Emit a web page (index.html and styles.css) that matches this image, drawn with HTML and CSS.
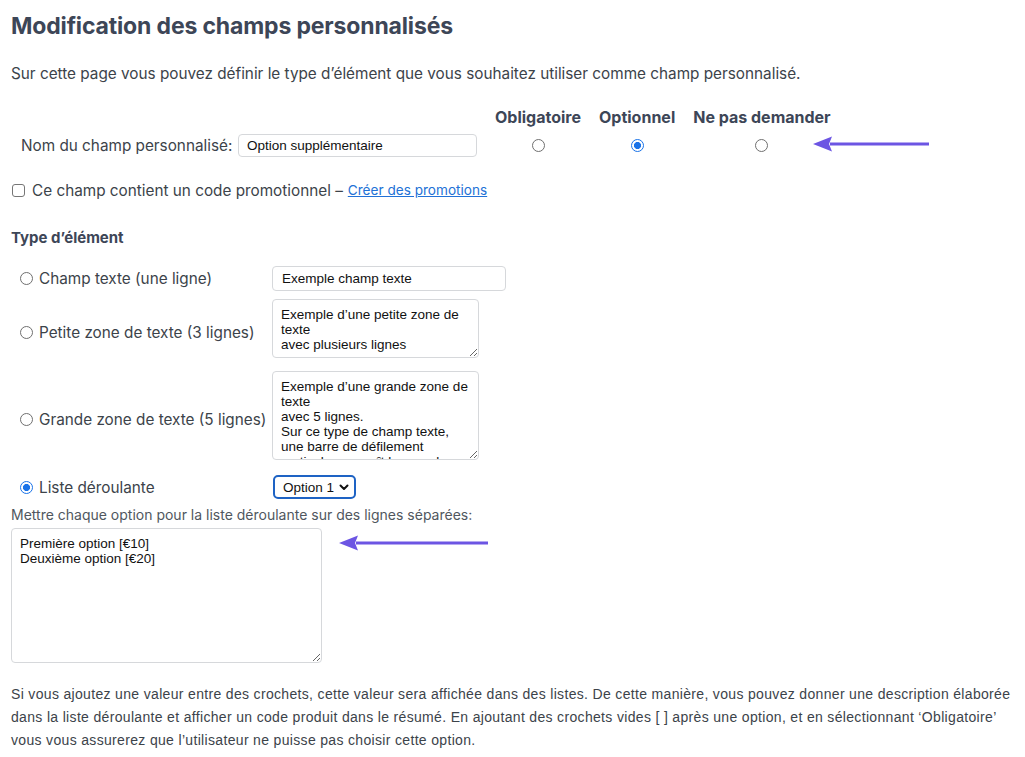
FILE: index.html
```html
<!DOCTYPE html>
<html lang="fr">
<head>
<meta charset="utf-8">
<title>Modification des champs personnalisés</title>
<link rel="stylesheet" href="styles.css">
</head>
<body>
<div class="page">
  <h1 class="title">Modification des champs personnalisés</h1>
  <p class="intro">Sur cette page vous pouvez définir le type d’élément que vous souhaitez utiliser comme champ personnalisé.</p>

  <div class="name-grid">
    <div class="cell"></div>
    <div class="col-head">Obligatoire</div>
    <div class="col-head">Optionnel</div>
    <div class="col-head">Ne pas demander</div>
    <div class="name-cell">
      <label class="name-label">Nom du champ personnalisé:</label>
      <input class="text-input name-input" type="text" value="Option supplémentaire">
    </div>
    <div class="radio-cell"><span class="radio"></span></div>
    <div class="radio-cell"><span class="radio checked"></span></div>
    <div class="radio-cell"><span class="radio"></span></div>
  </div>

  <div class="promo-row">
    <span class="checkbox"></span>
    <span class="promo-text">Ce champ contient un code promotionnel –</span>
    <a class="promo-link" href="#">Créer des promotions</a>
  </div>

  <h2 class="section-title">Type d’élément</h2>

  <div class="type-grid">
    <div class="type-label row1"><span class="radio"></span>Champ texte (une ligne)</div>
    <div class="type-field row1"><input class="text-input sample-input" type="text" value="Exemple champ texte"></div>

    <div class="type-label row2 area-label"><span class="radio"></span>Petite zone de texte (3 lignes)</div>
    <div class="type-field row2"><textarea class="area small-area">Exemple d’une petite zone de texte
avec plusieurs lignes</textarea></div>

    <div class="type-label row3 area-label"><span class="radio"></span>Grande zone de texte (5 lignes)</div>
    <div class="type-field row3"><textarea class="area big-area">Exemple d’une grande zone de texte
avec 5 lignes.
Sur ce type de champ texte, une barre de défilement verticale apparaît lorsque le texte dépasse.</textarea></div>

    <div class="type-label row4"><span class="radio checked"></span>Liste déroulante</div>
    <div class="type-field row4">
      <div class="select">Option 1
        <svg class="chev" width="10" height="7" viewBox="0 0 10 7"><path d="M1.5 1.5 L5 5 L8.5 1.5" fill="none" stroke="#111" stroke-width="2" stroke-linecap="round" stroke-linejoin="round"/></svg>
      </div>
    </div>
  </div>

  <p class="options-hint">Mettre chaque option pour la liste déroulante sur des lignes séparées:</p>
  <textarea class="area options-area">Première option [€10]
Deuxième option [€20]</textarea>

  <p class="footnote">Si vous ajoutez une valeur entre des crochets, cette valeur sera affichée dans des listes. De cette manière, vous pouvez donner une description élaborée dans la liste déroulante et afficher un code produit dans le résumé. En ajoutant des crochets vides [ ] après une option, et en sélectionnant ‘Obligatoire’ vous vous assurerez que l’utilisateur ne puisse pas choisir cette option.</p>

  <svg class="arrow arrow-top" width="120" height="20" viewBox="0 0 120 20"><path d="M17 8.5 H116 V11.5 H17 Z" fill="#6c55e3"/><path d="M0 10 L19 2.5 L16 10 L19 17.5 Z" fill="#6c55e3"/></svg>
  <svg class="arrow arrow-bottom" width="152" height="20" viewBox="0 0 152 20"><path d="M17 8.5 H149 V11.5 H17 Z" fill="#6c55e3"/><path d="M0 10 L19 2.5 L16 10 L19 17.5 Z" fill="#6c55e3"/></svg>
</div>
</body>
</html>
```

FILE: styles.css
```css
* { box-sizing: border-box; }
html, body { margin: 0; background: #ffffff; }
body {
  font-family: Inter, "Liberation Sans", Arial, sans-serif;
  color: #3c434a;
  font-size: 15.3px;
}
.page {
  position: relative;
  padding: 0 11px;
  width: 1025px;
  height: 757px;
  overflow: hidden;
}
.title {
  margin: 0;
  padding-top: 12px;
  font-size: 23px;
  line-height: 28px;
  font-weight: 700;
  color: #3d4657;
  letter-spacing: -0.15px;
}
.intro {
  margin: 0;
  padding-top: 23px;
  line-height: 22px;
}
.name-grid {
  display: grid;
  grid-template-columns: 466px auto auto auto;
  justify-content: start;
  column-gap: 18px;
  margin-top: 22px;
  align-items: center;
}
.col-head {
  font-weight: 700;
  font-size: 16px;
  line-height: 20px;
  color: #3d4657;
  text-align: center;
}
.name-cell {
  display: flex;
  align-items: center;
  padding-left: 10px;
  margin-top: 7px;
  height: 23px;
}
.name-label { white-space: nowrap; }
.text-input {
  font-family: "Liberation Sans", Arial, sans-serif;
  font-size: 13.5px;
  color: #111;
  border: 1px solid #d6d8db;
  border-radius: 4px;
  background: #fff;
  padding: 0 8px;
  outline: none;
}
.name-input { width: 239px; height: 23px; margin-left: auto; }
.radio-cell {
  display: flex;
  justify-content: center;
  margin-top: 7px;
}
.radio {
  display: inline-block;
  width: 13px;
  height: 13px;
  border-radius: 50%;
  border: 1px solid #6f6f6f;
  background: #fff;
  flex: none;
}
.radio.checked {
  border: 1.5px solid #1a73e8;
  background: radial-gradient(circle, #1a73e8 0 3.3px, #fff 3.8px);
}
.promo-row {
  display: flex;
  align-items: center;
  margin-top: 23px;
  height: 20px;
}
.checkbox {
  width: 13px;
  height: 13px;
  border: 1px solid #767676;
  border-radius: 3px;
  margin-left: 1px;
  margin-right: 7px;
  background: #fff;
}
.promo-text { white-space: nowrap; }
.promo-link {
  margin-left: 5px;
  font-size: 13.6px;
  color: #2271d6;
  text-decoration: underline;
}
.section-title {
  margin: 28px 0 0 0;
  font-size: 15px;
  line-height: 20px;
  font-weight: 700;
  color: #3d4657;
}
.type-grid {
  display: grid;
  grid-template-columns: 252px auto;
  margin-top: 18px;
  padding-left: 9px;
}
.type-label {
  display: flex;
  align-items: center;
  gap: 6px;
  white-space: nowrap;
}
.area-label { padding-top: 7px; }
.type-field { display: flex; align-items: flex-start; }
.row2 { margin-top: 8px; }
.row3 { margin-top: 13px; }
.row4 { margin-top: 15px; }
.sample-input { width: 234px; height: 25px; padding: 0 9px; }
.area {
  display: block;
  font-family: "Liberation Sans", Arial, sans-serif;
  font-size: 13.5px;
  line-height: 15px;
  color: #111;
  border: 1px solid #d6d8db;
  border-radius: 4px;
  background: #fff;
  padding: 7px 8px;
  overflow: hidden;
  resize: vertical;
  outline: none;
}
.small-area { width: 207px; height: 59px; }
.big-area { width: 207px; height: 89px; }
.select {
  display: flex;
  align-items: center;
  gap: 5px;
  height: 24px;
  padding: 0 5px 0 8px;
  margin-left: 1px;
  border: 2px solid #1e63c4;
  border-radius: 5px;
  font-family: "Liberation Sans", Arial, sans-serif;
  font-size: 13.5px;
  color: #111;
}
.options-hint {
  margin: 7px 0 0 0;
  font-size: 14px;
  line-height: 18px;
  color: #50575e;
}
.options-area {
  margin-top: 4px;
  width: 311px;
  height: 135px;
}
.footnote {
  margin: 20px 0 0 0;
  font-family: "Liberation Sans", Arial, sans-serif;
  font-size: 14px;
  letter-spacing: 0.33px;
  line-height: 23px;
  color: #3c434a;
  width: 1000px;
}
.arrow { position: absolute; }
.arrow-top { left: 813px; top: 134px; }
.arrow-bottom { left: 339px; top: 533px; }
```
